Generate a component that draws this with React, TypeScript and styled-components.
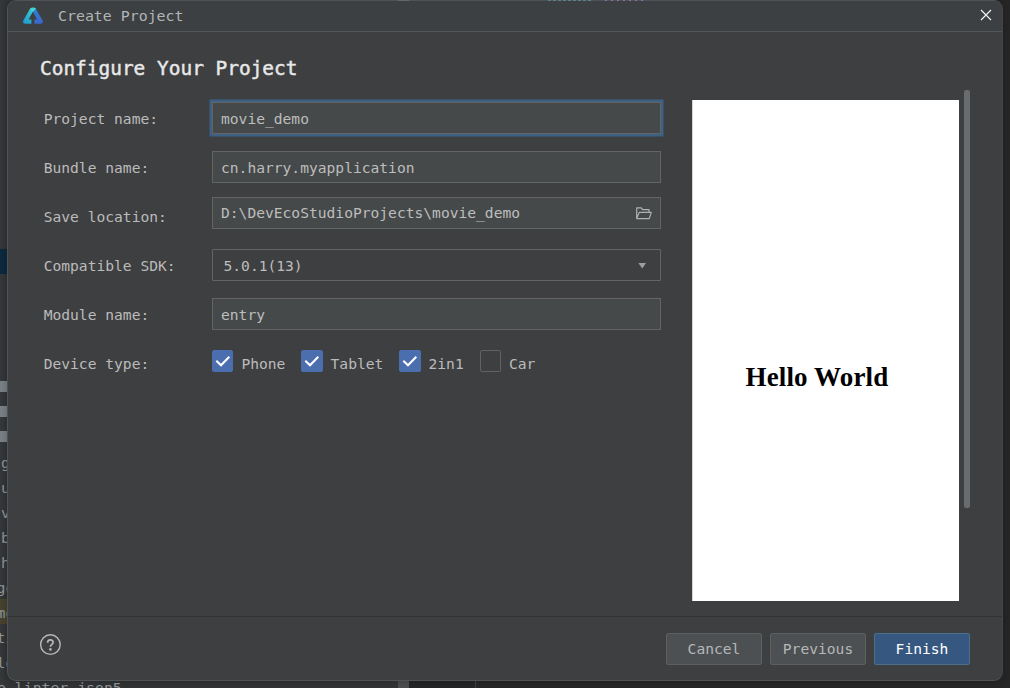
import React from "react";
import styled, { createGlobalStyle } from "styled-components";

const Global = createGlobalStyle`
  * { box-sizing: border-box; }
  body { margin: 0; background: #262626; overflow: hidden; }
`;

const Desktop = styled.div`
  position: relative;
  width: 1010px;
  height: 688px;
  overflow: hidden;
  background: #262626;
  font-family: "DejaVu Sans Mono", monospace;
  font-size: 14.62px;
  color: #bbbbbb;
`;

const Ide = styled.div`
  display: flex;
  height: 688px;
`;

const Tree = styled.div`
  width: 398px;
  height: 688px;
  padding-top: 249px;
  overflow: hidden;
  background: linear-gradient(90deg, #36393b 0, #313335 8px);
  color: #92979a;
  font-size: 14.8px;
`;

const TreeRow = styled.div<{ $bg?: string; $shift?: number }>`
  height: 25px;
  line-height: 27px;
  white-space: pre;
  background: ${(p) => p.$bg || "transparent"};
  text-indent: ${(p) => p.$shift || 0}px;
`;

const FolderEdge = styled.div`
  width: 8px;
  height: 11px;
  margin: 0 0 14px;
  background: #7a8389;
`;

const TreeGap = styled.div<{ $h: number }>`
  height: ${(p) => p.$h}px;
`;

const TreeItems = styled.div`
  margin-top: -7px;
`;

const TreeScroll = styled.div`
  width: 11px;
  background: #4c4e50;
`;

const EditorGutter = styled.div`
  width: 67px;
  background: #242526;
  border-right: 1px solid #404142;
`;

const Dialog = styled.div`
  position: absolute;
  left: 7px;
  top: 0;
  width: 996px;
  height: 681px;
  display: flex;
  flex-direction: column;
  background: #3e3f41;
  border: 1px solid #505355;
  border-right-color: #444648;
  border-radius: 9px;
  overflow: hidden;
  box-shadow: 0 0 8px rgba(0, 0, 0, 0.25);
`;

const TitleBar = styled.header`
  height: 31px;
  flex: none;
  display: flex;
  align-items: center;
  padding: 0 10px 0 14px;
  background: #3c4042;
  border-bottom: 1px solid #515658;
`;

const TitleText = styled.span`
  flex: 1;
  padding-left: 14px;
  font-size: 14.9px;
  line-height: 30px;
  color: #b2b4b5;
`;

const Main = styled.main`
  flex: 1;
  display: flex;
  min-height: 0;
`;

const Form = styled.section`
  width: 684px;
  padding: 24px 31px 0 32px;
`;

const Heading = styled.h1`
  margin: 0 0 12px;
  height: 25px;
  line-height: 25px;
  font-size: 19.45px;
  font-weight: 400;
  color: #e8e8e8;
  -webkit-text-stroke: 0.45px #e8e8e8;
  white-space: nowrap;
`;

const Row = styled.div<{ $lift?: number }>`
  height: 49px;
  display: grid;
  grid-template-columns: 172px 449px;
  align-items: center;

  > :last-child {
    margin-top: ${(p) => -(p.$lift || 0) * 2}px;
  }
`;

const Label = styled.label`
  padding: 1px 0 0 3.7px;
`;

const Field = styled.div<{ $focus?: boolean; $plain?: boolean }>`
  height: 32px;
  display: flex;
  align-items: center;
  justify-content: space-between;
  padding: ${(p) => (p.$plain ? "2px 13px 0 10.5px" : "1px 8px 0 8px")};
  color: #bdbdbd;
  background: ${(p) => (p.$plain ? "#3e3f41" : "#454949")};
  border: 1px solid #646464;
  border-radius: ${(p) => (p.$plain ? 1 : 0)}px;
  box-shadow: ${(p) => (p.$focus ? "0 0 0 2px #3d6185, 0 0 0 2.5px #3d6185" : "none")};
`;

const PathText = styled.span`
  margin-top: -2px;
`;

const Checks = styled.div`
  display: flex;
  gap: 15.8px;
`;

const Check = styled.div`
  display: flex;
  align-items: center;
  gap: 8px;
  height: 22px;
`;

const Box = styled.span<{ $on: boolean }>`
  width: 21.4px;
  height: 22px;
  display: grid;
  place-items: center;
  border-radius: 2px;
  background: ${(p) => (p.$on ? "#4b6eaf" : "transparent")};
  border: 1px solid ${(p) => (p.$on ? "#4b6eaf" : "#616263")};
`;

const CheckText = styled.span`
  padding-top: 6px;
`;

const Preview = styled.div`
  width: 267px;
  height: 501px;
  margin-top: 68px;
  padding-top: 260px;
  background: #fff;
  border-left: 1px solid #d4d4d4;
  color: #000;
  font: bold 27px/34px "Liberation Serif", serif;
  letter-spacing: 0.13px;
  text-indent: 52.6px;
  white-space: nowrap;
`;

const ScrollThumb = styled.div`
  width: 6px;
  height: 418px;
  margin: 58px 0 0 5px;
  border-radius: 2px;
  background: #696c6f;
`;

const Footer = styled.footer`
  height: 64px;
  flex: none;
  display: flex;
  align-items: center;
  gap: 8px;
  padding: 0 32px 0 31px;
  border-top: 1px solid #323335;
`;

const Help = styled.div`
  flex: 1;
  height: 22px;
  margin-top: -8px;
`;

const Button = styled.button<{ $primary?: boolean }>`
  width: 96px;
  height: 32px;
  padding: 0;
  font: inherit;
  color: ${(p) => (p.$primary ? "#ffffff" : "#b5b7b8")};
  background: ${(p) => (p.$primary ? "#365880" : "#4c5052")};
  border: 1px solid ${(p) => (p.$primary ? "#4c708c" : "#5e6060")};
  border-radius: 2px;
`;

const CodeSliver = styled.div`
  position: absolute;
  left: 398px;
  top: 0;
  width: 260px;
  height: 1px;
  background:
    repeating-linear-gradient(90deg, #5c8287 0 3px, transparent 3px 5px) 150px 0 / 45px 1px no-repeat,
    repeating-linear-gradient(90deg, #8a70ab 0 2px, transparent 2px 6px) 207px 0 / 42px 1px no-repeat,
    linear-gradient(#64686a, #64686a) 0 0 / 11px 1px no-repeat;
`;

const Logo = () => (
  <svg width="22" height="18" viewBox="0 0 22 18">
    <defs>
      <linearGradient id="lg-left" x1="0.8" y1="0" x2="0.1" y2="1">
        <stop offset="0" stopColor="#3fd0d6" />
        <stop offset="1" stopColor="#1c9bd0" />
      </linearGradient>
      <linearGradient id="lg-right" x1="0.2" y1="0" x2="0.8" y2="1">
        <stop offset="0" stopColor="#2a83d3" />
        <stop offset="1" stopColor="#3d62cc" />
      </linearGradient>
    </defs>
    <path d="M8.2 1.6Q8.8 .8 9.8 .8H12.2Q13.2 .8 13.8 1.8L14 2.2L10.8 4.8L6.6 12.4H9.4V16.8H3.2Q1 16.8 1 14.8Q1 14 1.6 13Z" fill="url(#lg-left)" />
    <path d="M10.8 4.8L13.8 1.8L20.4 13Q21 14 21 14.8Q20.8 16.8 18.8 16.8H12.4V12.4H15.2Z" fill="url(#lg-right)" />
    <path d="M9.8 .8H12.2Q13.2 .8 13.9 2L10.8 4.8L8 2.2Z" fill="#43d4d6" />
  </svg>
);

const CloseSvg = styled.svg`
  margin-top: -2px;
`;

const CloseIcon = () => (
  <CloseSvg width="12" height="12" viewBox="0 0 12 12" stroke="#f2f2f2" strokeWidth="1.2">
    <path d="M1 1L11 11M11 1L1 11" />
  </CloseSvg>
);

const FolderIcon = () => (
  <svg width="16" height="13" viewBox="0 0 16 13" fill="none" stroke="#afb1b3" strokeWidth="1.2" strokeLinejoin="round">
    <path d="M.7 11.6V.8H5.2L6.6 2.7H13V5.2M.7 11.6L3.2 5.4H15.3L13.2 11.6Z" />
  </svg>
);

const Tick = () => (
  <svg width="16" height="14" viewBox="0 0 16 14" fill="none" stroke="#fff" strokeWidth="2.1">
    <path d="M1.3 6.7L6 11.2L14.3 2.8" />
  </svg>
);

const HelpIcon = () => (
  <svg width="22" height="22" viewBox="0 0 22 22" fill="none" stroke="#b7b8b9">
    <circle cx="11.4" cy="10.6" r="9.8" strokeWidth="1.4" />
    <path d="M8.6 8.8C8.6 5 14.1 5 14.1 8.4C14.1 10.4 11.4 10.4 11.4 12.8" strokeWidth="1.7" />
    <circle cx="11.4" cy="15.4" r="1.3" fill="#b7b8b9" stroke="none" />
  </svg>
);

const treeItems = [
  { text: "g", shift: 1 },
  { text: "u", shift: 1 },
  { text: "v", shift: 1 },
  { text: "b", shift: 1 },
  { text: "h", shift: 1 },
  { text: "go", shift: -3.5 },
  { text: "mo", shift: -3.5, bg: "#47432f" },
  { text: "ti", shift: -3.5 },
  { text: "lo", shift: -3.5 },
  { text: "e-linter.json5", shift: -3 },
];

const devices = [
  { name: "Phone", on: true },
  { name: "Tablet", on: true },
  { name: "2in1", on: true },
  { name: "Car", on: false },
];

export default function App() {
  return (
    <Desktop>
      <Global />
      <Ide>
        <Tree>
          <TreeRow $bg="#0d293e" />
          <TreeGap $h={107} />
          <FolderEdge />
          <FolderEdge />
          <FolderEdge />
          <TreeItems>
            {treeItems.map((t) => (
              <TreeRow key={t.text} $shift={t.shift} $bg={t.bg}>
                {t.text}
              </TreeRow>
            ))}
          </TreeItems>
        </Tree>
        <TreeScroll />
        <EditorGutter />
      </Ide>
      <Dialog>
        <TitleBar>
          <Logo />
          <TitleText>Create Project</TitleText>
          <CloseIcon />
        </TitleBar>
        <Main>
          <Form>
            <Heading>Configure Your Project</Heading>
            <Row>
              <Label>Project name:</Label>
              <Field $focus>movie_demo</Field>
            </Row>
            <Row>
              <Label>Bundle name:</Label>
              <Field>cn.harry.myapplication</Field>
            </Row>
            <Row $lift={3}>
              <Label>Save location:</Label>
              <Field>
                <PathText>D:\DevEcoStudioProjects\movie_demo</PathText>
                <FolderIcon />
              </Field>
            </Row>
            <Row>
              <Label>Compatible SDK:</Label>
              <Field $plain>
                5.0.1(13)
                <svg width="9" height="6" viewBox="0 0 9 6">
                  <path d="M.4 0H8L4.2 5.4Z" fill="#9c9fa3" />
                </svg>
              </Field>
            </Row>
            <Row>
              <Label>Module name:</Label>
              <Field>entry</Field>
            </Row>
            <Row $lift={2}>
              <Label>Device type:</Label>
              <Checks>
                {devices.map((d) => (
                  <Check key={d.name}>
                    <Box $on={d.on}>{d.on && <Tick />}</Box>
                    <CheckText>{d.name}</CheckText>
                  </Check>
                ))}
              </Checks>
            </Row>
          </Form>
          <Preview>Hello World</Preview>
          <ScrollThumb />
        </Main>
        <Footer>
          <Help>
            <HelpIcon />
          </Help>
          <Button>Cancel</Button>
          <Button>Previous</Button>
          <Button $primary>Finish</Button>
        </Footer>
      </Dialog>
      <CodeSliver />
    </Desktop>
  );
}
